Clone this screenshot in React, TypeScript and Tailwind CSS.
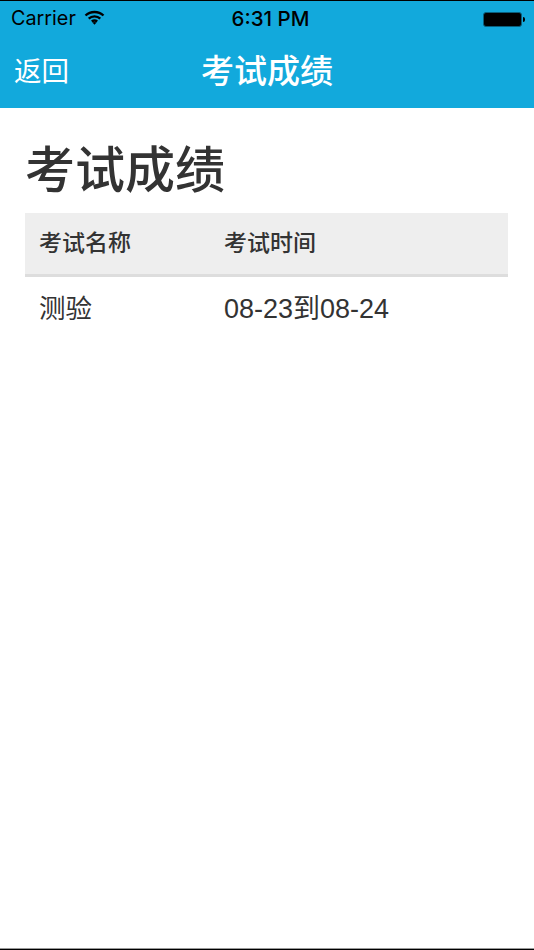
const cjk = { fontFamily: '"Liberation Sans", "Noto Sans CJK SC", sans-serif' };

export default function App() {
  return (
    <div className="flex h-[950px] w-[534px] flex-col overflow-hidden bg-white" style={cjk}>
      <div className="h-px shrink-0 bg-black" />
      <header className="h-[107px] shrink-0 bg-[#12a9dc]">
        <div className="flex h-[36px] items-center justify-between pl-[11px] pr-[9px] text-black">
          <div className="flex w-[155px] items-center gap-[8px] text-[19.8px]" style={{ fontFamily: 'Inter, sans-serif' }}>
            <span>Carrier</span>
            <svg className="mb-[3px]" width="21" height="15" viewBox="0 0 20 15" fill="none" stroke="black" strokeWidth="2.4">
              <path d="M1 5.5C6 0.8 14 0.8 19 5.5" />
              <path d="M4.2 8.6C7.5 5.6 12.5 5.6 15.8 8.6" />
              <path d="M7.3 11.5C9 10.1 11 10.1 12.7 11.5" />
              <path d="M10 14.8L7.9 12.6C9.1 11.7 10.9 11.7 12.1 12.6Z" fill="black" stroke="none" />
            </svg>
          </div>
          <span className="text-[20.5px] font-medium" style={{ fontFamily: 'Inter, sans-serif' }}>6:31 PM</span>
          <div className="flex w-[150px] items-center justify-end">
            <div className="h-[15px] w-[39px] rounded-[3px] border border-[#0b5f7c] bg-black" />
            <div className="ml-px h-[5px] w-[2px] rounded-r-sm bg-black" />
          </div>
        </div>
        <div className="relative flex h-[71px] items-center justify-center pb-[2px]">
          <span className="absolute left-[14px] text-[27.5px] leading-none text-white">返回</span>
          <span className="text-[33px] font-medium leading-none text-white">考试成绩</span>
        </div>
      </header>
      <main className="flex-1 pl-[25px] pr-[26px]">
        <h1 className="mt-[33px] h-[72px] text-[50px] font-medium leading-[60px] text-[#333333]">考试成绩</h1>
        <div className="flex h-[64px] items-center border-b-[3px] border-[#dddddd] bg-[#eeeeee] pl-[14px] pb-px text-[23px] font-medium text-[#333333]">
          <span className="w-[185px]">考试名称</span>
          <span>考试时间</span>
        </div>
        <div className="flex h-[66px] items-center pl-[14px] text-[26.5px] text-[#333333]">
          <span className="w-[185px]">测验</span>
          <span className="mb-[2px] text-[27px]">08-23到08-24</span>
        </div>
      </main>
      <div className="h-[1px] shrink-0 bg-[#999999]" />
      <div className="h-px shrink-0 bg-black" />
    </div>
  );
}
